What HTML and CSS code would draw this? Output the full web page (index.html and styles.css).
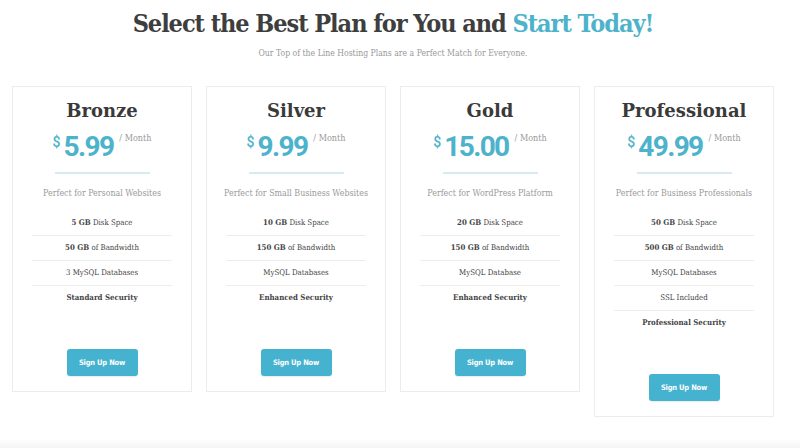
FILE: index.html
```html
<!DOCTYPE html>
<html>
<head>
<meta charset="utf-8">
<link rel="stylesheet" href="styles.css">
</head>
<body>
<div class="page">
  <header class="intro">
    <h1>Select the Best Plan for You and <span class="accent">Start Today!</span></h1>
    <p class="lead">Our Top of the Line Hosting Plans are a Perfect Match for Everyone.</p>
  </header>
  <div class="plans">
    <div class="card">
      <h2>Bronze</h2>
      <div class="price"><span class="cur">$</span><span class="amt">5.99</span><span class="per">/ Month</span></div>
      <div class="rule"></div>
      <p class="tag">Perfect for Personal Websites</p>
      <ul class="feats">
        <li><b>5 GB</b> Disk Space</li>
        <li><b>50 GB</b> of Bandwidth</li>
        <li>3 MySQL Databases</li>
        <li><b>Standard Security</b></li>
      </ul>
      <a class="btn">Sign Up Now</a>
    </div>
    <div class="card">
      <h2>Silver</h2>
      <div class="price"><span class="cur">$</span><span class="amt">9.99</span><span class="per">/ Month</span></div>
      <div class="rule"></div>
      <p class="tag">Perfect for Small Business Websites</p>
      <ul class="feats">
        <li><b>10 GB</b> Disk Space</li>
        <li><b>150 GB</b> of Bandwidth</li>
        <li>MySQL Databases</li>
        <li><b>Enhanced Security</b></li>
      </ul>
      <a class="btn">Sign Up Now</a>
    </div>
    <div class="card">
      <h2>Gold</h2>
      <div class="price"><span class="cur">$</span><span class="amt">15.00</span><span class="per">/ Month</span></div>
      <div class="rule"></div>
      <p class="tag">Perfect for WordPress Platform</p>
      <ul class="feats">
        <li><b>20 GB</b> Disk Space</li>
        <li><b>150 GB</b> of Bandwidth</li>
        <li>MySQL Database</li>
        <li><b>Enhanced Security</b></li>
      </ul>
      <a class="btn">Sign Up Now</a>
    </div>
    <div class="card">
      <h2>Professional</h2>
      <div class="price"><span class="cur">$</span><span class="amt">49.99</span><span class="per">/ Month</span></div>
      <div class="rule"></div>
      <p class="tag">Perfect for Business Professionals</p>
      <ul class="feats">
        <li><b>50 GB</b> Disk Space</li>
        <li><b>500 GB</b> of Bandwidth</li>
        <li>MySQL Databases</li>
        <li>SSL Included</li>
        <li><b>Professional Security</b></li>
      </ul>
      <a class="btn">Sign Up Now</a>
    </div>
  </div>
</div>
<div class="footband"></div>
</body>
</html>
```

FILE: styles.css
```css
html, body {
  margin: 0;
  padding: 0;
  background: #fff;
}
body {
  font-family: "DejaVu Serif", serif;
  font-stretch: condensed;
  color: #444;
  height: 448px;
  overflow: hidden;
  position: relative;
}
.page {
  width: 762px;
  margin-left: 12px;
}
.intro {
  text-align: center;
  padding-top: 8px;
}
h1 {
  margin: 0;
  font-family: "DejaVu Serif", serif;
  font-stretch: condensed;
  font-weight: bold;
  font-size: 25px;
  line-height: 32px;
  color: #3e3e3e;
  letter-spacing: -1.05px;
}
.accent {
  color: #4cb3cb;
}
.lead {
  margin: 8px 0 0;
  font-size: 8.6px;
  color: #999;
}
.plans {
  display: grid;
  grid-template-columns: repeat(4, 180px);
  column-gap: 14px;
  align-items: start;
  margin-top: 28px;
}
.card {
  border: 1px solid #ececec;
  text-align: center;
  padding: 12px 19px 15px;
  display: flex;
  flex-direction: column;
  align-items: center;
}
h2 {
  margin: 0;
  font-family: "DejaVu Serif", serif;
  font-stretch: normal;
  font-weight: bold;
  font-size: 18px;
  line-height: 24px;
  color: #3a3a3a;
}
.price {
  display: flex;
  align-items: flex-start;
  justify-content: center;
  margin-top: 7px;
  height: 34px;
}
.cur {
  font-family: Roboto, sans-serif;
  font-stretch: normal;
  font-weight: 500;
  color: #4cb3cb;
  font-size: 14px;
  line-height: 14px;
  margin-top: 5px;
  margin-right: 3px;
}
.amt {
  font-family: Roboto, sans-serif;
  font-stretch: normal;
  font-weight: bold;
  color: #4cb3cb;
  font-size: 28px;
  line-height: 34px;
  letter-spacing: -1.6px;
}
.per {
  font-size: 9px;
  color: #999;
  margin-left: 6px;
  margin-top: 3px;
  line-height: 10px;
}
.rule {
  width: 95px;
  height: 2px;
  background: #d6eaf0;
  margin-top: 8px;
}
.tag {
  margin: 13px 0 0;
  font-size: 8.8px;
  line-height: 12px;
  color: #9a9a9a;
  white-space: nowrap;
}
.feats {
  list-style: none;
  margin: 12px 0 0;
  padding: 0;
  width: 140px;
}
.feats li {
  font-size: 7.8px;
  line-height: 24px;
  border-bottom: 1px solid #ededed;
  color: #444;
}
.feats li:last-child {
  border-bottom: 0;
}
.feats b {
  font-weight: bold;
}
.btn {
  display: block;
  margin-top: 39px;
  width: 71px;
  height: 27px;
  line-height: 27px;
  background: #45b3cf;
  border-radius: 3px;
  color: #fff;
  font-family: "DejaVu Sans", sans-serif;
  font-stretch: condensed;
  font-weight: bold;
  font-size: 7.5px;
  letter-spacing: -0.2px;
  box-shadow: 0 1px 1px rgba(0,0,0,0.08);
}
.footband {
  position: absolute;
  left: 0;
  right: 0;
  bottom: 0;
  height: 8px;
  background: linear-gradient(#fdfdfd, #f5f5f5);
}
```
